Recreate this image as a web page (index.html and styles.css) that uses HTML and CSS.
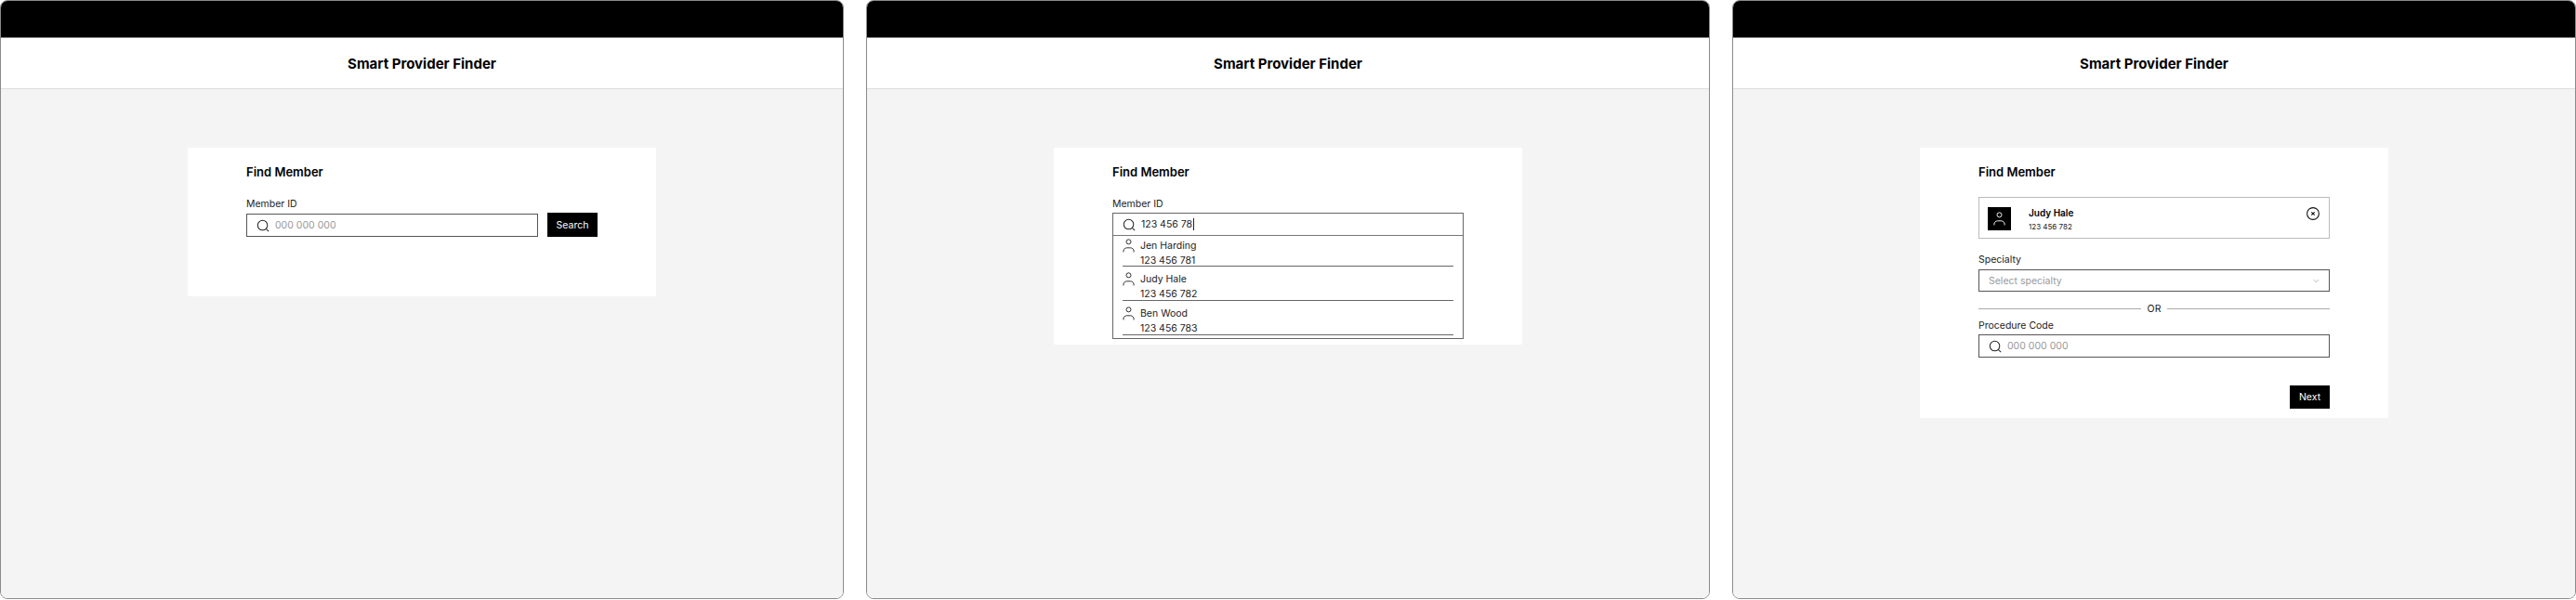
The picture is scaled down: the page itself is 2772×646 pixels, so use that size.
FILE: index.html
```html
<!DOCTYPE html>
<html lang="en">
<head>
    <meta charset="UTF-8">
    <title>Smart Provider Finder</title>
    <link rel="stylesheet" href="styles.css">
</head>
<body>
    <svg class="defs" width="0" height="0">
        <symbol id="i-search" viewBox="0 0 16 16">
            <circle cx="7.5" cy="7.5" r="6" fill="none" stroke="currentColor" stroke-width="1.15"/>
            <path d="M11.8 11.8 L15 15" fill="none" stroke="currentColor" stroke-width="1.15"/>
        </symbol>
        <symbol id="i-user" viewBox="0 0 14 16">
            <circle cx="7" cy="3.5" r="2.7" fill="none" stroke="currentColor"/>
            <path d="M1 15.5 V14 C1 12 3 10.5 5 10.5 H9 C11 10.5 13 12 13 14 V15.5" fill="none" stroke="currentColor"/>
        </symbol>
    </svg>

    <!-- step 1: empty search -->
    <section class="frame">
        <div class="topbar"></div>
        <header class="header"><h1>Smart Provider Finder</h1></header>
        <main class="main">
            <div class="card card-search">
                <h2>Find Member</h2>
                <label class="label">Member ID</label>
                <div class="search-row">
                    <div class="input">
                        <svg class="icon-search"><use href="#i-search"/></svg>
                        <span class="placeholder">000 000 000</span>
                    </div>
                    <button class="btn btn-search">Search</button>
                </div>
            </div>
        </main>
    </section>

    <!-- step 2: results dropdown -->
    <section class="frame">
        <div class="topbar"></div>
        <header class="header"><h1>Smart Provider Finder</h1></header>
        <main class="main">
            <div class="card card-results">
                <h2>Find Member</h2>
                <label class="label">Member ID</label>
                <div class="combo">
                    <div class="combo-input">
                        <svg class="icon-search"><use href="#i-search"/></svg>
                        <span class="value">123 456 78</span><span class="caret"></span>
                    </div>
                    <ul class="results">
                        <li class="result">
                            <svg class="icon-user"><use href="#i-user"/></svg>
                            <div><div class="result-name">Jen Harding</div><div class="result-id">123 456 781</div></div>
                        </li>
                        <li class="result">
                            <svg class="icon-user"><use href="#i-user"/></svg>
                            <div><div class="result-name">Judy Hale</div><div class="result-id">123 456 782</div></div>
                        </li>
                        <li class="result">
                            <svg class="icon-user"><use href="#i-user"/></svg>
                            <div><div class="result-name">Ben Wood</div><div class="result-id">123 456 783</div></div>
                        </li>
                    </ul>
                </div>
            </div>
        </main>
    </section>

    <!-- step 3: member picked -->
    <section class="frame">
        <div class="topbar"></div>
        <header class="header"><h1>Smart Provider Finder</h1></header>
        <main class="main">
            <div class="card card-picked">
                <h2>Find Member</h2>
                <div class="member">
                    <div class="avatar"><svg class="icon-avatar"><use href="#i-user"/></svg></div>
                    <div class="member-info">
                        <div class="member-name">Judy Hale</div>
                        <div class="member-id">123 456 782</div>
                    </div>
                    <svg class="icon-close" viewBox="0 0 14 14">
                        <circle cx="7" cy="7" r="6.4" fill="none" stroke="currentColor" stroke-width="1.1"/>
                        <path d="M5.3 5.3 L8.7 8.7 M8.7 5.3 L5.3 8.7" fill="none" stroke="currentColor" stroke-width="1.1"/>
                    </svg>
                </div>
                <label class="label label-specialty">Specialty</label>
                <div class="input select">
                    <span class="placeholder">Select specialty</span>
                    <svg class="icon-chevron" viewBox="0 0 8 5"><path d="M1 1 L4 4 L7 1" fill="none" stroke="currentColor" stroke-width="0.8"/></svg>
                </div>
                <div class="divider"><span>OR</span></div>
                <label class="label">Procedure Code</label>
                <div class="input">
                    <svg class="icon-search"><use href="#i-search"/></svg>
                    <span class="placeholder">000 000 000</span>
                </div>
                <div class="actions"><button class="btn btn-next">Next</button></div>
            </div>
        </main>
    </section>
</body>
</html>
```

FILE: styles.css
```css
* {
    box-sizing: border-box;
}
html, body {
    margin: 0;
    padding: 0;
    background: white;
}
body {
    display: flex;
    gap: 24px;
    height: 646px;
    font-family: Inter, "Liberation Sans", sans-serif;
    color: #111;
}
.defs {
    position: absolute;
}
.frame {
    flex: 1;
    display: flex;
    flex-direction: column;
    height: 645px;
    border: 1px solid #8a8a8a;
    border-radius: 8px;
    overflow: hidden;
    background: white;
}
.topbar {
    height: 40px;
    background: black;
    border-bottom: 1px solid #888;
}
.header {
    height: 55px;
    display: flex;
    align-items: center;
    justify-content: center;
    border-bottom: 1px solid #ddd;
}
h1 {
    margin: 0;
    font-size: 15px;
    font-weight: 700;
    color: black;
}
.main {
    flex: 1;
    background: #f4f4f4;
    padding-top: 63px;
}
.card {
    width: 504px;
    margin: 0 auto;
    padding: 17px 63px 0;
    background: white;
}
.card-search {
    height: 160px;
}
.card-results {
    height: 212px;
}
.card-picked {
    height: 291px;
}
h2 {
    margin: 0 0 19px;
    font-size: 13px;
    line-height: 18px;
    font-weight: 600;
    color: black;
}
.label {
    display: block;
    height: 14px;
    margin-bottom: 2px;
    font-size: 10.5px;
    line-height: 14px;
    color: #222;
}
.search-row {
    display: flex;
    align-items: flex-end;
    gap: 10px;
}
.search-row .input {
    flex: 1;
}
.input {
    display: flex;
    align-items: center;
    height: 25px;
    padding-left: 10px;
    border: 1px solid #555;
    font-size: 10.5px;
}
.icon-search {
    width: 14px;
    height: 14px;
    margin-right: 6px;
    flex-shrink: 0;
    color: #222;
}
.placeholder {
    color: #999;
}
.value {
    color: #222;
}
.btn {
    height: 26px;
    border: none;
    background: black;
    color: white;
    font-family: inherit;
    font-size: 10.5px;
}
.btn-search {
    width: 54px;
}
.btn-next {
    width: 43px;
    height: 25px;
}
.combo {
    border: 1px solid #666;
    height: 136px;
}
.combo-input {
    display: flex;
    align-items: center;
    height: 24px;
    padding-left: 10px;
    border-bottom: 1px solid #777;
    font-size: 10.5px;
}
.caret {
    width: 1px;
    height: 13px;
    margin-left: 1px;
    background: #222;
}
.results {
    list-style: none;
    margin: 0;
    padding: 0 10px;
}
.result {
    display: flex;
    gap: 6px;
    height: 37px;
    padding-top: 6px;
    border-bottom: 1px solid #666;
    font-size: 10.5px;
    line-height: 16px;
    color: #222;
}
.result:first-child {
    height: 33px;
    padding-top: 3px;
}
.icon-user {
    width: 13px;
    height: 15px;
    flex-shrink: 0;
    color: #222;
}
.member {
    display: flex;
    height: 45px;
    margin-top: -1px;
    padding: 10px 0 0 9px;
    border: 1px solid #bbb;
}
.avatar {
    display: flex;
    align-items: center;
    justify-content: center;
    width: 25px;
    height: 25px;
    background: black;
    color: white;
}
.icon-avatar {
    width: 13px;
    height: 15px;
}
.member-info {
    flex: 1;
    margin-left: 19px;
}
.member-name {
    font-size: 10px;
    line-height: 13px;
    font-weight: 600;
    color: black;
}
.member-id {
    margin-top: 2px;
    font-size: 8px;
    line-height: 12px;
    color: #222;
}
.icon-close {
    width: 14px;
    height: 14px;
    margin-right: 10px;
    color: #111;
}
.label-specialty {
    margin-top: 16px;
    margin-bottom: 3px;
}
.select {
    justify-content: space-between;
    height: 24px;
    padding: 0 10px;
}
.icon-chevron {
    width: 7px;
    height: 5px;
    color: #999;
}
.divider {
    display: flex;
    align-items: center;
    gap: 7px;
    height: 14px;
    margin: 11px 0 5px;
    font-size: 10.5px;
    color: #222;
}
.divider::before,
.divider::after {
    content: "";
    flex: 1;
    height: 1px;
    background: #aaa;
}
.actions {
    display: flex;
    justify-content: flex-end;
    margin-top: 30px;
}
```
